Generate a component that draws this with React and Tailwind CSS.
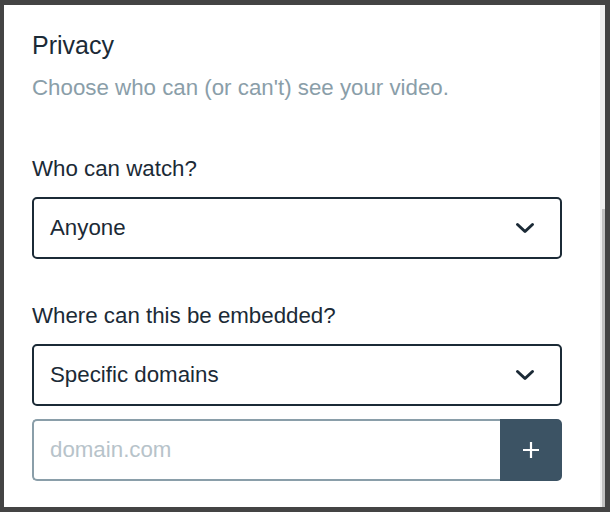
import React from "react";

const Chevron = () => (
  <svg width="20" height="12" viewBox="0 0 20 12" fill="none" className="shrink-0">
    <path d="M2.5 2.5 L10 9.5 L17.5 2.5" stroke="#1b2a36" strokeWidth="3" strokeLinecap="round" strokeLinejoin="round" />
  </svg>
);

const Select = ({ value }) => (
  <div className="h-[62px] rounded-[5px] border-2 border-[#1b2a36] flex items-center justify-between pl-[16px] pr-[25px]">
    <span className="text-[22.3px] text-[#1b2a36]">{value}</span>
    <Chevron />
  </div>
);

const App = () => {
  return (
    <div
      className="w-[610px] h-[512px] bg-[#444444] pt-[5px] pl-[4px] pr-[5px] pb-[5px] flex"
      style={{ fontFamily: '"Liberation Sans", Arial, sans-serif' }}
    >
      <div className="flex-1 bg-white pl-[28px] pr-[38px] pt-[25px]">
        <h2 className="text-[25px] leading-[30px] text-[#1b2a36]">Privacy</h2>
        <p className="mt-[15px] text-[22.3px] leading-[26px] text-[#8a9ea9]">
          Choose who can (or can't) see your video.
        </p>

        <p className="mt-[55px] text-[22.3px] leading-[26px] text-[#1b2a36]">Who can watch?</p>
        <div className="mt-[15px]">
          <Select value="Anyone" />
        </div>

        <p className="mt-[44px] text-[22.3px] leading-[26px] text-[#1b2a36]">Where can this be embedded?</p>
        <div className="mt-[15px]">
          <Select value="Specific domains" />
        </div>

        <div className="mt-[13px] flex h-[62px]">
          <div className="flex-1 flex items-center border-2 border-r-0 border-[#8a9ea9] rounded-l-[5px] pl-[16px]">
            <span className="text-[22.3px] text-[#b7c3ca]">domain.com</span>
          </div>
          <button
            type="button"
            className="w-[62px] bg-[#3c5364] rounded-r-[5px] flex items-center justify-center"
            aria-label="Add domain"
          >
            <svg width="18" height="18" viewBox="0 0 18 18">
              <path d="M9 1 V17 M1 9 H17" stroke="white" strokeWidth="2.2" />
            </svg>
          </button>
        </div>
      </div>
      <div className="w-[5px] bg-[#f0f0f0] flex flex-col">
        <div className="h-[204px]" />
        <div className="flex-1 ml-[2px] bg-[#c1c1c1]" />
      </div>
    </div>
  );
};

export default App;
